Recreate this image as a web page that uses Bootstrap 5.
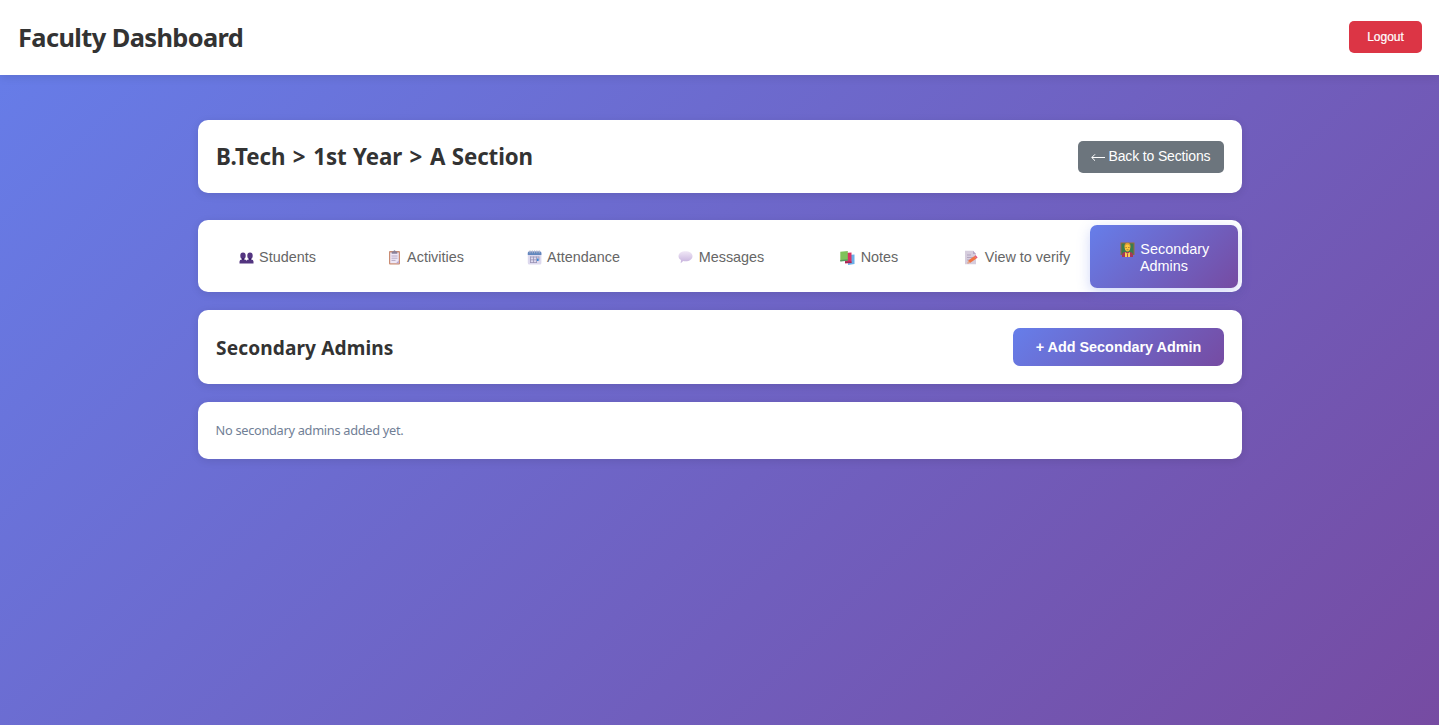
<!DOCTYPE html>
<html lang="en">
<head>
<meta charset="utf-8">
<meta name="viewport" content="width=device-width, initial-scale=1">
<title>Faculty Dashboard</title>
<link href="https://cdn.jsdelivr.net/npm/bootstrap@5.3.0/dist/css/bootstrap.min.css" rel="stylesheet">
<style>
  body { background: linear-gradient(135deg, #667eea 0%, #764ba2 100%); font-family: "Noto Sans", sans-serif; color: #333; }
  h1, h2, h3 { white-space: nowrap; font-weight: 700; line-height: 1.36; margin: 0; }
  .topbar { height: 75px; padding: 0 17px 1px 18px; box-shadow: 0 2px 9px rgba(0,0,0,.1); }
  .topbar h1 { font-size: 25.4px; letter-spacing: -.6px; }
  .page { width: 1044px; padding-top: 45px; }
  .panel { border-radius: 10px; box-shadow: 0 2px 9px rgba(0,0,0,.1); padding: 0 18px; }
  .crumbs { height: 73px; margin-bottom: 27px; }
  .crumbs h2 { font-size: 22.3px; letter-spacing: -.1px; word-spacing: .7px; padding: 2px 0 0 .5px; }
  .crumb-sep { margin: 0 1.5px 0 1px; }
  .btn, .tab { font-family: "Liberation Sans", sans-serif; border: 0; white-space: nowrap; }
  .btn-out { background: #dc3545; color: #fff; width: 73px; height: 32px; padding: 0; font-size: 12px; border-radius: 5px; -webkit-text-stroke: .2px #fff; }
  .btn-return { background: #6c757d; color: #fff; width: 146px; height: 32px; padding: 0; font-size: 14px; letter-spacing: -.15px; border-radius: 5px; }
  .tabs { height: 72px; padding: 4.5px 4px 4px; margin-bottom: 18px; border-radius: 10px; box-shadow: 0 2px 9px rgba(0,0,0,.1); }
  .tab { flex: 0 0 148px; background: none; color: #666; font-size: 14.4px; line-height: 17px; padding: 2px 0 0 2.5px; border-radius: 7px; }
  .tab svg { width: 15px; height: 15px; margin-left: 1px; margin-right: 5.5px; vertical-align: -3px; }
  .tab.active { background: linear-gradient(135deg, #667eea, #764ba2); color: #fff; padding: 3px 0 0 1px; box-shadow: 0 4px 13px rgba(102,126,234,.3); }
  .heading { height: 74px; margin-bottom: 18px; }
  .heading h3 { font-size: 19.1px; letter-spacing: .12px; padding: 3px 0 0 .5px; }
  .btn-add { background: linear-gradient(135deg, #667eea, #764ba2); color: #fff; width: 211px; height: 38px; padding: 2px 0 0 1px; font-size: 14.4px; font-weight: 700; border-radius: 7px; }
  .empty { height: 57px; color: #718096; font-size: 12.8px; letter-spacing: -.3px; }
</style>
</head>
<body class="min-vh-100">
<header class="topbar bg-white d-flex align-items-center justify-content-between">
  <h1>Faculty Dashboard</h1>
  <button class="btn btn-out">Logout</button>
</header>
<main class="page mx-auto">
  <section class="panel crumbs bg-white d-flex align-items-center justify-content-between">
    <h2>B.Tech <span class="crumb-sep">&gt;</span> 1st Year <span class="crumb-sep">&gt;</span> A Section</h2>
    <button class="btn btn-return d-flex align-items-center justify-content-center"><svg class="me-1" width="14" height="10" viewBox="0 0 14 10" fill="none" stroke="#fff"><path d="M.8 5.5H14M4 2.3.8 5.5 4 8.7"/></svg>Back to Sections</button>
  </section>
  <nav class="tabs bg-white d-flex">
    <button class="tab"><svg viewBox="0 0 15 15"><g fill="#533580"><ellipse cx="4" cy="5.700" rx="2.700" ry="3.200"/><ellipse cx="11" cy="5.700" rx="2.700" ry="3.200"/><path d="M.5 13.500v-2q0-2 2.500-2h2q2 0 2.500 1.300Q8 9.500 10 9.500h2q2.500 0 2.500 2v2Z"/></g><path d="M2.800 8h2.400v2H2.800zM9.800 8h2.400v2H9.800z" fill="#3c216b"/></svg>Students</button>
    <button class="tab"><svg viewBox="0 0 15 15"><rect x="2" y="1" width="11" height="13.500" rx="1" fill="#ca8c73"/><path d="M3.200 2.500h8.600v10.800H3.200z" fill="#eee7f6"/><path d="M9 13.300 11.800 10.500v2.800Z" fill="#b9a5d0"/><path d="M4.700 1.500h1.600Q7.500-1 8.700 1.500h1.600v2.300H4.700Z" fill="#8a819a"/><path d="M4.500 6h6M4.500 8.200h6M4.500 10.400h4" stroke="#a99bb9" stroke-width=".8"/></svg>Activities</button>
    <button class="tab"><svg viewBox="0 0 15 15"><rect x=".8" y="1" width="13.600" height="13.500" rx="1.500" fill="#ddd9ee"/><path d="M.8 5V3q0-1.500 1.500-1.500h10.600q1.500 0 1.500 1.500v2Z" fill="#6186bd"/><path d="M3 .3v3M5.300.3v3M7.600.3v3M9.900.3v3M12.200.3v3" stroke="#b6b8cc" stroke-width=".9"/><path d="M3.500 6.500v6.500M6.500 6.500v6.500M9.500 6.500v6.500M12 6.500v4M3 7h9M3 9.800h9M3 12.500h7" stroke="#9b94b5" stroke-width=".8" fill="none"/><path d="M10 8.500h1.500v2.500H10z" fill="#3689dc"/></svg>Attendance</button>
    <button class="tab"><svg viewBox="0 0 15 15"><defs><linearGradient id="bubble" x2="0" y2="1"><stop stop-color="#f0e7f6"/><stop offset="1" stop-color="#c5b0dc"/></linearGradient></defs><path d="M7.500 1.300c4.200 0 7 2.100 7 5s-2.800 5-7 5c-1 0-1.500 0-2.300-.2L2.700 13.200l.3-3.100C1.400 9.200.5 7.800.5 6.300c0-2.900 2.800-5 7-5Z" fill="url(#bubble)"/></svg>Messages</button>
    <button class="tab"><svg viewBox="0 0 15 15"><path d="m8 5 6.500-.5V14L8 15Z" fill="#6aaee8"/><path d="m5 3 6.500-.5V13L5 13.500Z" fill="#d83265"/><path d="M5 11.500h6.500V13H5z" fill="#9e2857"/><path d="M.3 1.700 7.800 1v9.500l-7.500.7Z" fill="#7fc35b"/><path d="m.3 10 7.500-.7v1.400l-7.500.8Z" fill="#559b63"/></svg>Notes</button>
    <button class="tab"><svg viewBox="0 0 15 15"><path d="M1 .8h8l3 3.200v10.200H1Z" fill="#d6cddd"/><path d="m9 .8 3 3.200H9Z" fill="#b6a6c5"/><path d="M3 5h4M3 7.500h6M3 10h3" stroke="#afa1bc" stroke-width=".9"/><path d="m3.500 13.500.8-3 6.200-4.500 2 2.600-6.200 4.200Z" fill="#f17443"/><path d="m10.500 6 1.300-.8 1.800 2.300-1.100 1.100Z" fill="#e65478"/><path d="m3.500 13.500.8-3 2 2.300Z" fill="#dfad96"/></svg>View to verify</button>
    <button class="tab active"><svg viewBox="0 0 15 15"><rect x=".5" y=".5" width="14" height="12.500" fill="#9b6d39"/><rect x="1.500" y="1.500" width="12" height="11" fill="#397c51"/><path d="M2 15v-2q0-3 3.500-3h4q3.500 0 3.500 3v2Z" fill="#a73756"/><path d="m5 10 2.500 1.800L10 10v5H5Z" fill="#f6cf56"/><path d="M7 12h1v3H7z" fill="#c14149"/><ellipse cx="7.500" cy="4.500" rx="3.100" ry="3.800" fill="#dc9a31"/><ellipse cx="7.500" cy="6" rx="2.500" ry="3.400" fill="#ffc83d"/><path d="M5.500 5.500h1.300M8.200 5.500h1.300M6.500 7.800h2" stroke="#835329" stroke-width=".7"/></svg>Secondary<br>Admins</button>
  </nav>
  <section class="panel heading bg-white d-flex align-items-center justify-content-between">
    <h3>Secondary Admins</h3>
    <button class="btn btn-add">+ Add Secondary Admin</button>
  </section>
  <section class="panel empty bg-white d-flex align-items-center">No secondary admins added yet.</section>
</main>
<script src="https://cdn.jsdelivr.net/npm/bootstrap@5.3.0/dist/js/bootstrap.bundle.min.js"></script>
</body>
</html>
